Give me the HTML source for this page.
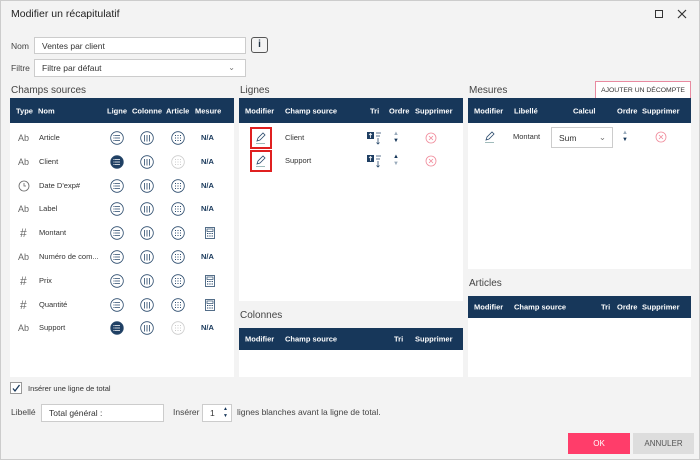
<!DOCTYPE html>
<html><head><meta charset="utf-8"><style>
*{box-sizing:border-box;margin:0;padding:0}
body{width:700px;height:460px;background:#f3f3f3;font-family:"Liberation Sans",sans-serif;font-size:8px;color:#333;position:relative;overflow:hidden;border:1px solid #ccc}
.a{position:absolute}
.lbl{font-size:10px;color:#444}
.inp{position:absolute;background:#fff;border:1px solid #ccc;font-size:8.5px;padding:0 0 0 7px;display:flex;align-items:center;color:#333}
.panel{position:absolute;background:#fff}
.hd{position:absolute;left:0;right:0;top:0;background:#17375a;color:#fff;font-weight:bold;font-size:7.5px}
.hd span{position:absolute;top:50%;transform:translateY(-50%)}
.tx{position:absolute;font-size:7.5px;color:#333}
.ic{position:absolute}
</style></head><body>
<div class="a" style="left:10px;top:7px;font-size:10.5px;color:#222">Modifier un récapitulatif</div>
<div class="a" style="left:654px;top:9px;width:8px;height:8px;border:1.3px solid #333"></div>
<svg class="a" style="left:676px;top:8px" width="10" height="10"><path d="M1 1l8 8M9 1l-8 8" stroke="#333" stroke-width="1.2"/></svg>

<div class="a lbl" style="left:10px;top:40px;font-size:8.5px">Nom</div>
<div class="inp" style="left:33px;top:36px;width:212px;height:17px">Ventes par client</div>
<div class="a" style="left:250px;top:36px;width:17px;height:16px;border:1.2px solid #555;border-radius:3px;font-size:10px;text-align:center;line-height:14px;font-weight:bold;color:#234">i</div>
<div class="a lbl" style="left:10px;top:62px;font-size:8.5px">Filtre</div>
<div class="inp" style="left:33px;top:58px;width:212px;height:18px">Filtre par défaut<span style="position:absolute;right:10px;top:3px;color:#777;font-size:8px">⌄</span></div>

<div class="a lbl" style="left:10px;top:84px">Champs sources</div>
<div class="a lbl" style="left:239px;top:84px">Lignes</div>
<div class="a lbl" style="left:468px;top:84px">Mesures</div>
<div class="a" style="left:594px;top:80px;width:96px;height:19px;border:1px solid #e88aa0;background:#fff;font-size:6.8px;text-align:center;line-height:17px;color:#333;white-space:nowrap">AJOUTER UN DÉCOMPTE</div>

<div class="panel" style="left:9px;top:97px;width:224px;height:279px">
<div class="hd" style="height:25px"><span style="left:6px">Type</span><span style="left:28px">Nom</span><span style="left:97px">Ligne</span><span style="left:122px">Colonne</span><span style="left:156px">Article</span><span style="left:185px">Mesure</span></div>
</div>
<div id="rows"></div>

<div class="panel" style="left:238px;top:97px;width:224px;height:203px">
<div class="hd" style="height:25px"><span style="left:6px">Modifier</span><span style="left:46px">Champ source</span><span style="left:131px">Tri</span><span style="left:150px">Ordre</span><span style="left:176px">Supprimer</span></div>
</div>
<div class="a lbl" style="left:239px;top:309px">Colonnes</div>
<div class="panel" style="left:238px;top:327px;width:224px;height:49px">
<div class="hd" style="height:22px"><span style="left:6px">Modifier</span><span style="left:46px">Champ source</span><span style="left:155px">Tri</span><span style="left:176px">Supprimer</span></div>
</div>

<div class="panel" style="left:467px;top:97px;width:223px;height:171px">
<div class="hd" style="height:25px"><span style="left:6px">Modifier</span><span style="left:46px">Libellé</span><span style="left:105px">Calcul</span><span style="left:149px">Ordre</span><span style="left:174px">Supprimer</span></div>
</div>
<div class="a lbl" style="left:468px;top:277px">Articles</div>
<div class="panel" style="left:467px;top:295px;width:223px;height:81px">
<div class="hd" style="height:22px"><span style="left:6px">Modifier</span><span style="left:46px">Champ source</span><span style="left:133px">Tri</span><span style="left:149px">Ordre</span><span style="left:174px">Supprimer</span></div>
</div>

<div id="extra"></div>

<div class="a" style="left:9px;top:381px;width:12px;height:12px;border:1px solid #999;background:#fff"></div>
<svg class="a" style="left:10px;top:382px" width="10" height="10"><path d="M2 5.5l2 2.5 4.5-6" stroke="#17375a" stroke-width="1.3" fill="none"/></svg>
<div class="a" style="left:27px;top:383px;font-size:7.5px">Insérer une ligne de total</div>
<div class="a" style="left:10px;top:406px;font-size:8.5px;color:#444">Libellé</div>
<div class="inp" style="left:40px;top:403px;width:123px;height:18px">Total général :</div>
<div class="a" style="left:172px;top:406px;font-size:8.5px;color:#444">Insérer</div>
<div class="inp" style="left:201px;top:403px;width:30px;height:18px">1<span style="position:absolute;right:3px;top:1px;font-size:5px;line-height:7px;color:#17375a">▲<br>▼</span></div>
<div class="a" style="left:236px;top:406px;font-size:8.5px;color:#444">lignes blanches avant la ligne de total.</div>

<div class="a" style="left:567px;top:432px;width:62px;height:21px;background:#ff3d6a;color:#fff;font-size:8px;text-align:center;line-height:21px">OK</div>
<div class="a" style="left:632px;top:432px;width:61px;height:21px;background:#ddd;color:#555;font-size:8px;text-align:center;line-height:21px">ANNULER</div>

<script>
var rows=[["Ab","Article",0,1],["Ab","Client",1,0],["clk","Date D'exp#",0,1],["Ab","Label",0,1],["#","Montant",0,1,1],["Ab","Numéro de com...",0,1],["#","Prix",0,1,1],["#","Quantité",0,1,1],["Ab","Support",1,0]];
var h="";
var C="#2a4a6c";
function lig(x,y,f){var s=f?'#fff':C;return '<svg class="ic" style="left:'+(x-7)+'px;top:'+(y-7)+'px" width="14" height="14"><circle cx="7" cy="7" r="6.3" fill="'+(f?'#1f3f63':'#fff')+'" stroke="'+C+'" stroke-width=".8"/><g stroke="'+s+'" stroke-width=".7"><path d="M5 4.5h5M5 7h5M5 9.5h5"/></g><g fill="'+s+'"><rect x="3.5" y="4" width="1" height="1"/><rect x="3.5" y="6.5" width="1" height="1"/><rect x="3.5" y="9" width="1" height="1"/></g></svg>';}
function col(x,y){return '<svg class="ic" style="left:'+(x-7)+'px;top:'+(y-7)+'px" width="14" height="14"><circle cx="7" cy="7" r="6.3" fill="#fff" stroke="'+C+'" stroke-width=".8"/><path d="M4.5 4v6.5M7 4v6.5M9.5 4v6.5" stroke="'+C+'" stroke-width=".8"/></svg>';}
function art(x,y,l){var c=l?'#ccc':C;return '<svg class="ic" style="left:'+(x-7)+'px;top:'+(y-7)+'px" width="14" height="14"><circle cx="7" cy="7" r="6.3" fill="#fff" stroke="'+c+'" stroke-width=".8"/><g fill="'+c+'"><rect x="4" y="4" width="1" height="1"/><rect x="6.5" y="4" width="1" height="1"/><rect x="9" y="4" width="1" height="1"/><rect x="4" y="6.5" width="1" height="1"/><rect x="6.5" y="6.5" width="1" height="1"/><rect x="9" y="6.5" width="1" height="1"/><rect x="4" y="9" width="1" height="1"/><rect x="6.5" y="9" width="1" height="1"/><rect x="9" y="9" width="1" height="1"/></g></svg>';}
function calc(x,y){return '<svg class="ic" style="left:'+(x-7)+'px;top:'+(y-7)+'px" width="14" height="14"><rect x="2.5" y="1.5" width="9" height="11" fill="#fff" stroke="'+C+'" stroke-width=".8"/><rect x="4" y="3" width="6" height="2.5" fill="none" stroke="'+C+'" stroke-width=".7"/><g fill="'+C+'"><rect x="4" y="7" width="1.3" height="1"/><rect x="6.3" y="7" width="1.3" height="1"/><rect x="8.6" y="7" width="1.3" height="1"/><rect x="4" y="9.5" width="1.3" height="1"/><rect x="6.3" y="9.5" width="1.3" height="1"/><rect x="8.6" y="9.5" width="1.3" height="1"/></g></svg>';}
rows.forEach(function(r,i){var y=137+i*23.8;
 if(r[0]=="clk")h+='<svg class="ic" style="left:17px;top:'+(y-6)+'px" width="12" height="12"><circle cx="6" cy="6" r="5" fill="none" stroke="#666" stroke-width=".8"/><path d="M6 3v3h2" stroke="#666" stroke-width=".8" fill="none"/></svg>';
 else h+='<div class="tx" style="left:'+(r[0]=="#"?19:17)+'px;top:'+(y-6)+'px;font-size:'+(r[0]=="#"?12:9)+'px;color:#666;line-height:12px">'+r[0]+'</div>';
 h+='<div class="tx" style="left:38px;top:'+(y-5)+'px">'+r[1]+'</div>';
 h+=lig(116,y,r[2])+col(146,y)+art(177,y,r[3]==0);
 h+=r[4]?calc(209,y):'<div class="tx" style="left:200px;top:'+(y-5)+'px;font-weight:bold;color:#17375a">N/A</div>';
});
document.getElementById('rows').innerHTML=h;
function pen(x,y){return '<svg class="ic" style="left:'+(x-7)+'px;top:'+(y-7)+'px" width="14" height="14"><path d="M3 10l1-3 5-5 2 2-5 5z" fill="none" stroke="'+C+'" stroke-width=".8"/><path d="M2 12.5h9" stroke="#8aa" stroke-width=".8"/></svg>';}
function del(x,y){return '<svg class="ic" style="left:'+(x-6)+'px;top:'+(y-6)+'px" width="12" height="12"><circle cx="6" cy="6" r="5" fill="none" stroke="#f08a9a" stroke-width=".8"/><path d="M4 4l4 4M8 4l-4 4" stroke="#f08a9a" stroke-width=".8"/></svg>';}
function ord(x,y,a){return '<div class="tx" style="left:'+(x-4)+'px;top:'+(y-7)+'px;font-size:6px;line-height:7px;color:'+(a?'#17375a':'#9ab')+'">▲</div><div class="tx" style="left:'+(x-4)+'px;top:'+(y)+'px;font-size:6px;line-height:7px;color:'+(a?'#9ab':'#17375a')+'">▼</div>';}
function tri(x,y){return '<svg class="ic" style="left:'+(x-8)+'px;top:'+(y-8)+'px" width="16" height="16"><rect x="1" y="2" width="7" height="7" fill="#1f3f63"/><path d="M4.5 8V3.5M3 5l1.5-1.5L6 5" stroke="#fff" fill="none" stroke-width=".8"/><path d="M10 3h5M10 6h4M12 8v6M10.5 12.5l1.5 1.5 1.5-1.5" stroke="'+C+'" fill="none" stroke-width=".8"/></svg>';}
var e="";
[[137,"Client",0],[160,"Support",1]].forEach(function(r){var y=r[0];
 e+='<div class="a" style="left:249px;top:'+(y-11)+'px;width:22px;height:22px;border:2px solid #e02020"></div>'+pen(260,y);
 e+='<div class="tx" style="left:284px;top:'+(y-5)+'px">'+r[1]+'</div>'+tri(373,y)+ord(396,y,r[2])+del(430,y);
});
e+=pen(489,136)+'<div class="tx" style="left:512px;top:131px">Montant</div>';
e+='<div class="inp" style="left:550px;top:126px;width:62px;height:21px">Sum<span style="position:absolute;right:6px;top:4px;color:#777">⌄</span></div>';
e+=ord(625,136,0)+del(660,136);
document.getElementById('extra').innerHTML=e;
</script>
</body></html>
